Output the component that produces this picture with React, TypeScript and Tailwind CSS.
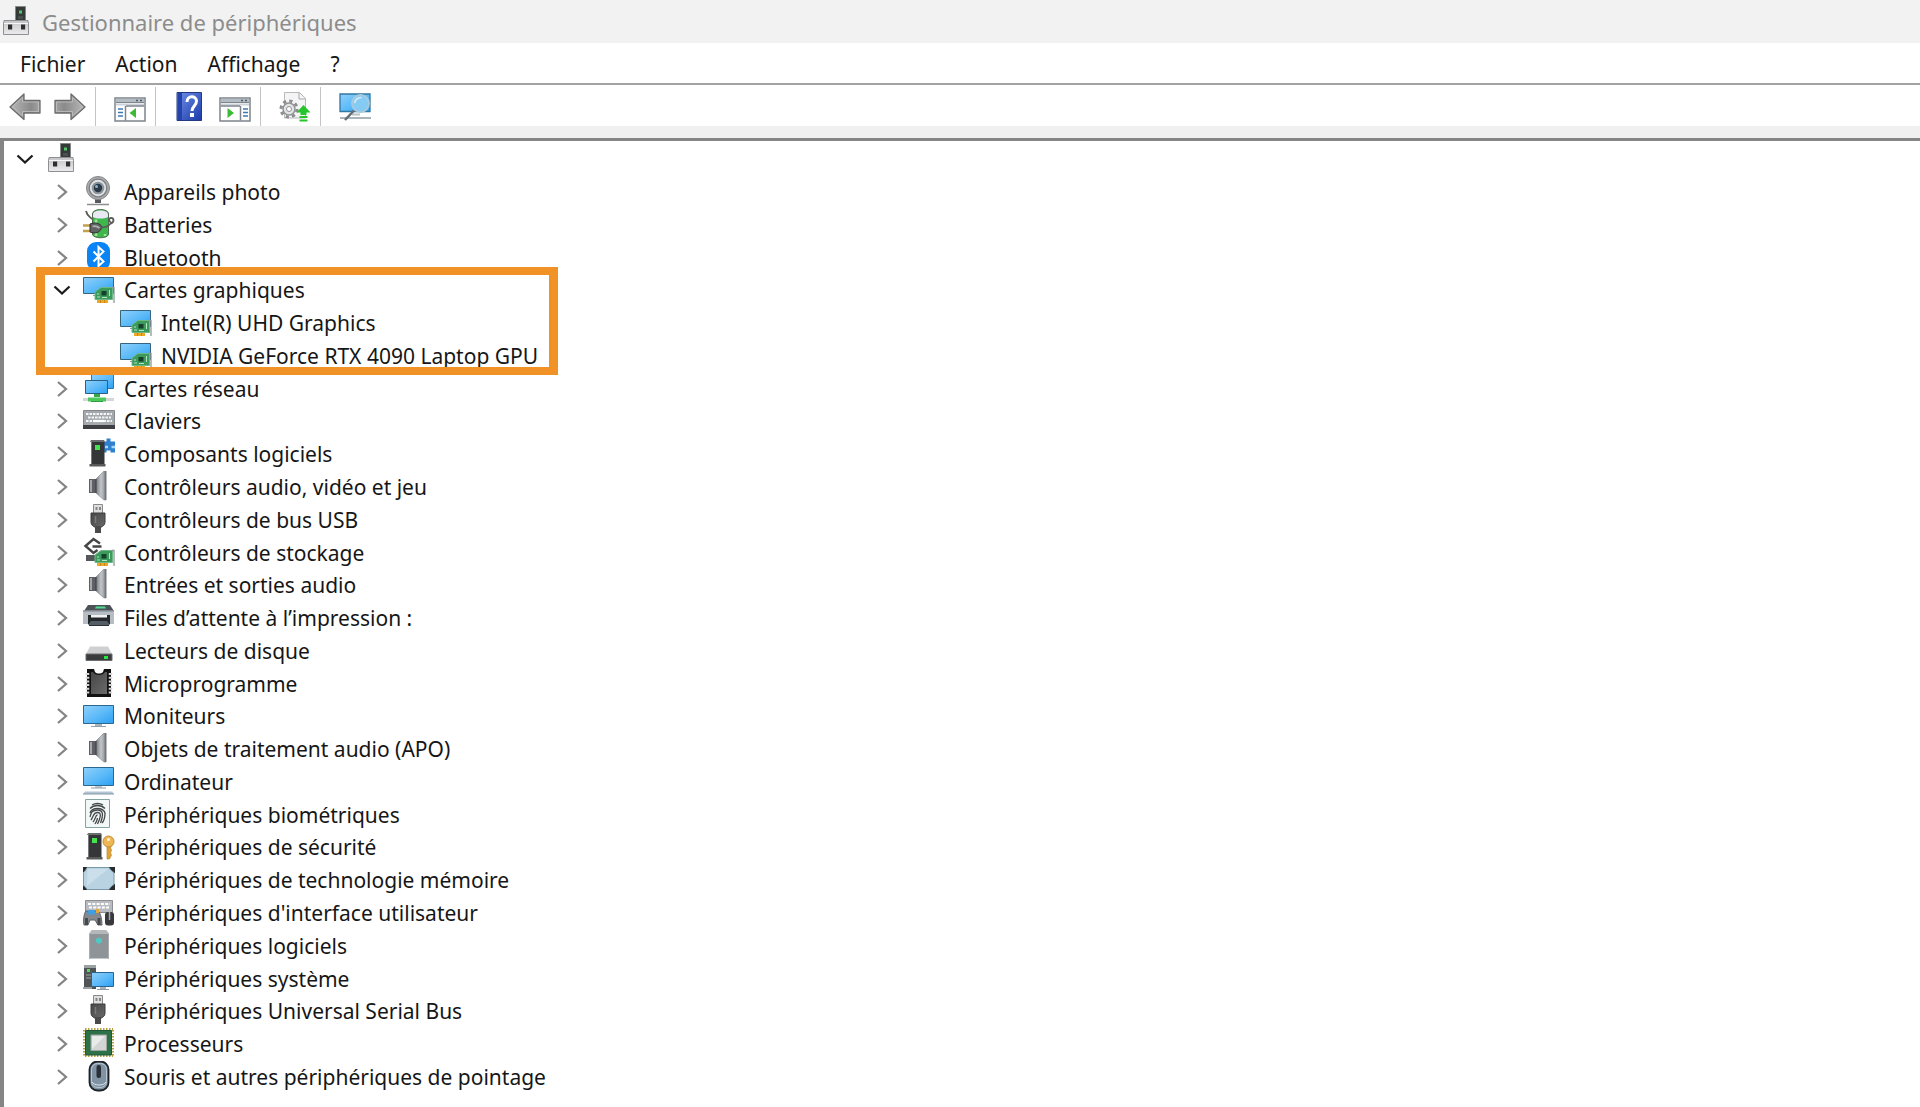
import React, { useState } from 'react';

interface IconProps {
  className?: string;
}

interface Device {
  name: string;
  icon: React.FC<IconProps>;
  children?: Device[];
}

const Svg: React.FC<{ className?: string; children: React.ReactNode }> = ({ className = 'h-8 w-8', children }) => (
  <svg className={`shrink-0 ${className}`} viewBox="0 0 32 32" fill="none" aria-hidden="true">
    {children}
  </svg>
);

/* Shared gradients */
const Gradients = () => (
  <svg className="absolute h-0 w-0" aria-hidden="true">
    <defs>
      <linearGradient id="screen" x1="0" y1="0" x2="1" y2="1">
        <stop offset="0" stopColor="#8fd0fb" />
        <stop offset="0.55" stopColor="#5ab9f8" />
        <stop offset="1" stopColor="#2c9ff3" />
      </linearGradient>
      <linearGradient id="steel" x1="0" y1="0" x2="1" y2="0">
        <stop offset="0" stopColor="#777b80" />
        <stop offset="0.5" stopColor="#c3c6ca" />
        <stop offset="1" stopColor="#85898e" />
      </linearGradient>
      <linearGradient id="light" x1="0" y1="0" x2="0" y2="1">
        <stop offset="0" stopColor="#c4c4c7" />
        <stop offset="1" stopColor="#ececef" />
      </linearGradient>
      <linearGradient id="arrow" x1="0" y1="0" x2="1" y2="0">
        <stop offset="0" stopColor="#b8b8b8" />
        <stop offset="0.7" stopColor="#8a8a8a" />
        <stop offset="1" stopColor="#a5a5a5" />
      </linearGradient>
      <linearGradient id="help" x1="0" y1="0" x2="1" y2="1">
        <stop offset="0" stopColor="#6f8fe8" />
        <stop offset="1" stopColor="#1c3aa8" />
      </linearGradient>
      <linearGradient id="dark" x1="0" y1="0" x2="1" y2="1">
        <stop offset="0" stopColor="#474747" />
        <stop offset="1" stopColor="#6a6a6a" />
      </linearGradient>
    </defs>
  </svg>
);

const DeviceManagerIcon: React.FC<IconProps> = ({ className }) => (
  <Svg className={className}>
    <path d="M14.500 .5h10v14h-10z" fill="#343a37" stroke="#85878a" />
    <path d="M18 4.500h3v3h-3z" fill="#58c46a" />
    <path d="M17 10h5v3h-5z" fill="#4a504d" />
    <path d="M3 14.500h24l.5 3.500v10.500h-25V18z" fill="url(#light)" stroke="#8f9094" />
    <path d="M3 17.500h24" stroke="#f6f6f7" />
    <path d="M7 18.500h4v5H7zM20 18.500h4v5h-4z" fill="#2e2e30" />
    <path d="M11.500 18v5.500M24.500 18v5.500" stroke="#b9babd" />
  </Svg>
);

const CameraIcon: React.FC<IconProps> = ({ className }) => (
  <Svg className={className}>
    <path d="M12 23h6v4h-6z" fill="#55585c" />
    <path d="M4 28.500h22" stroke="#8b8d90" strokeWidth="1.500" />
    <circle cx="15" cy="12" r="11.500" fill="#a9abad" stroke="#84868a" />
    <circle cx="15" cy="12" r="8.800" fill="#e2e3e4" stroke="#7b7d80" strokeWidth="1.300" />
    <circle cx="15" cy="12" r="6.300" fill="#8b959e" />
    <circle cx="15" cy="12" r="4.200" fill="#2c3946" />
    <circle cx="13.500" cy="10.500" r="1.500" fill="#8eb4cf" />
  </Svg>
);

const BatteryIcon: React.FC<IconProps> = ({ className }) => (
  <Svg className={className}>
    <path d="M9.500 5c0-6 16-6 16 0v20c0 5-16 5-16 0z" fill="#3fb64b" stroke="#4f6a50" />
    <path d="M10 5.500c0-5.500 15-5.500 15 0v2.500c-4 2-11 2-15 0z" fill="#e9e9f6" />
    <path d="M13 10.500v6M13 24v3M22 25v2" stroke="#9be797" strokeWidth="2.500" />
    <path d="M3 2c1 5 4 6 6 8" stroke="#5a5a55" strokeWidth="1.800" />
    <path d="M0 16.500h8M0 22h8" stroke="#c3a049" strokeWidth="2.500" />
    <path d="M7 15c5-2 10-1 12 3-2 6-7 7-12 5z" fill="#626365" stroke="#303031" />
    <path d="M9.500 17.500c3-1 5 0 7 1.500" stroke="#b0b1b3" strokeWidth="1.800" />
    <path d="M18 18.500c4 0 7-1 9-3.500 5-1.500 4-6.500 1-6s-2.500 3 .5 5" stroke="#5a5a5a" strokeWidth="1.800" />
  </Svg>
);

const BluetoothIcon: React.FC<IconProps> = ({ className }) => (
  <Svg className={className}>
    <rect x="4" y="0" width="23" height="29" rx="9" fill="#0a84f5" />
    <path d="M10.500 9.500l10 10-5 4.500V5l5 4.500-10 10" stroke="#fff" strokeWidth="2" />
  </Svg>
);

const BoardShape = () => (
  <g>
    <path d="M14 25h11v4H14z" fill="#efa823" />
    <path d="M17.500 25v4M21.500 25v4" stroke="#cd8717" />
    <path d="M12 18l6-4.500h11.500v12H12z" fill="#3c9a5c" stroke="#6cb985" />
    <path d="M18.500 17h5v4.500h-5z" fill="#17402b" />
    <path d="M14 20h2M14 23h3M26.500 16v6M19 23.500h5" stroke="#b5e4c0" />
    <path d="M28.500 13.500h2.500V29" stroke="#90979b" strokeWidth="1.300" />
  </g>
);

const DisplayIcon: React.FC<IconProps> = ({ className }) => (
  <Svg className={className}>
    <path d="M.5 3.500h30v16H.5z" fill="url(#screen)" stroke="#35647f" />
    <path d="M10 21.500h3" stroke="#8d979e" />
    <BoardShape />
  </Svg>
);

const NetworkIcon: React.FC<IconProps> = ({ className }) => (
  <Svg className={className}>
    <path d="M8.500 1.500h22v14h-22z" fill="url(#screen)" stroke="#2d78aa" />
    <path d="M2.500 7.500h22v13h-22z" fill="url(#screen)" stroke="#2a5f85" />
    <path d="M11 21h6v3h-6z" fill="#35a94a" />
    <path d="M0 26.500h31" stroke="#d4d6d8" strokeWidth="3" />
    <path d="M5 26.500h18" stroke="#4cc95c" strokeWidth="4" />
    <path d="M8 28.500h12" stroke="#2f9e43" />
  </Svg>
);

const KeyboardIcon: React.FC<IconProps> = ({ className }) => (
  <Svg className={className}>
    <path d="M.5 5.500h31v18H.5z" fill="#a5a8ad" stroke="#85888d" />
    <path d="M0 20h32v4H0z" fill="#3d3f42" />
    <path d="M3 9h26M5 12.500h23M3 16h26" stroke="#f4f5f6" strokeWidth="2.200" strokeDasharray="2.500 1" />
    <path d="M10 16h11" stroke="#fff" strokeWidth="2.200" />
  </Svg>
);

const TowerShape = () => (
  <g>
    <path d="M8 2h13l1 2H7z" fill="#6b6d6f" />
    <path d="M8 4h13.500v22H8z" fill="#343637" />
    <path d="M8.500 3v23" stroke="#77797b" />
    <path d="M6.500 26h16v2.500h-16z" fill="#57595b" />
    <path d="M12 7h5v5h-5z" fill="#45e34f" />
  </g>
);

const SoftwareComponentIcon: React.FC<IconProps> = ({ className }) => (
  <Svg className={className}>
    <path d="M19 3.500h4.500V.5h4v3H32v11h-4.500v-2h-4v2H19z" fill="#2f80cd" />
    <path d="M22 9h3M28.500 9H32" stroke="#a7d6f7" strokeWidth="2.500" />
    <TowerShape />
  </Svg>
);

const SpeakerIcon: React.FC<IconProps> = ({ className }) => (
  <Svg className={className}>
    <path d="M13 8l8-8h2v29h-2l-8-7z" fill="url(#steel)" stroke="#7e8185" strokeWidth=".6" />
    <path d="M22.500 0v29" stroke="#74777a" strokeWidth="1.600" />
    <path d="M6 8h7v14H6z" fill="#5d6064" />
    <path d="M8 9v12" stroke="#a7a9ac" strokeWidth="2" />
    <path d="M13 8v14" stroke="#3c3e41" />
  </Svg>
);

const UsbIcon: React.FC<IconProps> = ({ className }) => (
  <Svg className={className}>
    <path d="M10.500.5h9v9h-9z" fill="#dededf" stroke="#88898b" />
    <path d="M12.500 3h2v3h-2zM16 3h2v3h-2z" fill="#858688" />
    <path d="M8 9h14v9c0 3-2 4-3.500 5h-7C10 22 8 21 8 18z" fill="url(#dark)" stroke="#3d3d3e" />
    <path d="M12 22h6v7h-6z" fill="#4a4a4b" />
    <path d="M12.500 12v7" stroke="#7b7b7c" strokeWidth="1.500" />
  </Svg>
);

const StorageIcon: React.FC<IconProps> = ({ className }) => (
  <Svg className={className}>
    <path d="M3 18h12v6H3z" fill="#55585a" />
    <path d="M17 6.500L10.500 2 2.500 9l8 7 4-3" stroke="#454545" strokeWidth="2.500" />
    <path d="M9.500 9.500h9" stroke="#454545" strokeWidth="2.500" />
    <BoardShape />
  </Svg>
);

const PrinterIcon: React.FC<IconProps> = ({ className }) => (
  <Svg className={className}>
    <path d="M5 3h22l4 6H1z" fill="#4b5358" />
    <path d="M13 4.500h9l1 2H12z" fill="#52dc91" />
    <path d="M0 8.500h31V22H0z" fill="#b6bdc4" />
    <path d="M0 9h31" stroke="#7c848b" />
    <path d="M5 13h22v9H5z" fill="#25282a" />
    <path d="M8 13h16v2.500H8z" fill="#f1f3f4" />
    <path d="M8 19h16l3 4H5z" fill="#535d65" />
    <path d="M6 23.500h20" stroke="#2d3033" />
  </Svg>
);

const DiskIcon: React.FC<IconProps> = ({ className }) => (
  <Svg className={className}>
    <path d="M7 11.500h18l4 7.500H3z" fill="#cfd0d1" />
    <path d="M3 19h26v6.500H3z" fill="#393b3c" stroke="#6b6d6f" />
    <path d="M21 21h4v3h-4z" fill="#2be33f" />
  </Svg>
);

const FirmwareIcon: React.FC<IconProps> = ({ className }) => (
  <Svg className={className}>
    <path d="M4 1h7l1 3c2 2 6 2 8 0l1-3h7v28H4z" fill="#121212" />
    <path d="M8 4h2c2 4 10 4 12 0h2v22H8z" fill="url(#dark)" />
    <path d="M4.500 5v22M27.500 5v22" stroke="#d6d6d6" strokeWidth="3.500" strokeDasharray="2 1.700" />
  </Svg>
);

const MonitorIcon: React.FC<IconProps> = ({ className }) => (
  <Svg className={className}>
    <path d="M.5 5.500h30v18H.5z" fill="url(#screen)" stroke="#2c6790" />
    <path d="M12 24h7v2h-7z" fill="#aab4bc" />
    <path d="M8 26.500h15" stroke="#93a0aa" />
  </Svg>
);

const ComputerIcon: React.FC<IconProps> = ({ className }) => (
  <Svg className={className}>
    <path d="M.5 1.500h30v18H.5z" fill="url(#screen)" stroke="#2c6790" />
    <path d="M12 20h7v2h-7z" fill="#c2c9ce" />
    <path d="M8 22h15" stroke="#93a0aa" />
    <path d="M2 25.500h27l2 2.500H0z" fill="#b3c5d4" />
    <path d="M0 28h31" stroke="#8898a5" />
  </Svg>
);

const FingerprintIcon: React.FC<IconProps> = ({ className }) => (
  <Svg className={className}>
    <path d="M2.500.5h24v28h-24z" fill="#f2f8f8" stroke="#86a3a4" />
    <g stroke="#45484a" strokeWidth="1.300">
      <path d="M9 6c3-2 8-2 11 0M7 9.500c4-4 11-4 15 0M7 14c2-6 13-6 15 0 0 5-1 8-3 10" />
      <path d="M7 18c1-3 1-7 7.500-7 6 0 6 5 3 13M8 21c3-4 2-7.500 6.500-7.500s3 5.500 0 11.500M10 23c3-3 2-7 4.500-7M12 25c2-3 2-4 2.500-6" />
    </g>
  </Svg>
);

const SecurityIcon: React.FC<IconProps> = ({ className }) => (
  <Svg className={className}>
    <g transform="translate(-3 0)">
      <TowerShape />
    </g>
    <path d="M24 14h4.500l-1 3 1 2-1 3 1 2-2 4H24z" fill="#e2a336" stroke="#b98530" strokeWidth=".7" />
    <circle cx="25.500" cy="10.500" r="5.500" fill="#edb854" stroke="#c18c38" />
    <circle cx="25.500" cy="8.500" r="1.500" fill="#fff4dd" />
  </Svg>
);

const MemoryIcon: React.FC<IconProps> = ({ className }) => (
  <Svg className={className}>
    <path d="M0 3h9v6H0zM23 3h9v6h-9zM0 20h9v6H0zM23 20h9v6h-9z" fill="#292b2d" />
    <path d="M4 3.500h22c1 2 3 4 5 5v12c-2 1-4 3-5 5H4c-1-2-2-3-3.500-4v-13C2 7 3 6 4 3.500z" fill="#b9d3e2" stroke="#7b98aa" />
    <path d="M4.500 5H25L4 22z" fill="#cbdfea" />
  </Svg>
);

const HidIcon: React.FC<IconProps> = ({ className }) => (
  <Svg className={className}>
    <path d="M2.500 3.500h27v12h-27z" fill="#b8bbc0" stroke="#8b8e93" />
    <path d="M5 7h22M6 10.500h20" stroke="#fff" strokeWidth="2" strokeDasharray="3 1.300" />
    <path d="M3 14h12c3 2 4 10 4 14h-4l-3-5H7l-2 5H1c-1-5 0-12 2-14z" fill="#85898d" stroke="#5f6366" />
    <path d="M5 13h7v4.500H5z" fill="#3f9fe0" />
    <path d="M13 12h3v4h-3z" fill="#e9a537" />
    <path d="M2 21h3v7H2zM14.500 21h3v7h-3z" fill="#46494c" />
    <rect x="22" y="15" width="9" height="13.500" rx="3" fill="#37393c" />
    <path d="M26.500 15v8" stroke="#a6a9ac" strokeWidth="1.500" />
  </Svg>
);

const SoftwareDeviceIcon: React.FC<IconProps> = ({ className }) => (
  <Svg className={className}>
    <path d="M9 0h14l3 4v25H6V4z" fill="#8f9499" />
    <path d="M9 0h14l3 4H6z" fill="#b4b8bb" />
    <path d="M6.500 4v25M25.500 4v25" stroke="#aaaeb1" />
    <path d="M13 9l3-1.500L19 9v3l-3 2-3-2z" fill="#4fc9c3" />
    <path d="M7 28.500h18" stroke="#c5c8ca" />
  </Svg>
);

const SystemIcon: React.FC<IconProps> = ({ className }) => (
  <Svg className={className}>
    <path d="M1 2h12v24H1z" fill="#505457" />
    <path d="M1 2h12v3H1zM0 24h9v2H0z" fill="#9ba0a3" />
    <path d="M4 6h3v3H4z" fill="#57d85f" />
    <path d="M3 12h6M3 15h5" stroke="#85898c" strokeWidth="1.500" />
    <path d="M8.500 9.500h22v14h-22z" fill="url(#screen)" stroke="#2a6590" />
    <path d="M17 24h6v2h-6z" fill="#a9b2b9" />
    <path d="M14 26.500h12" stroke="#8d9ba5" />
  </Svg>
);

const ProcessorIcon: React.FC<IconProps> = ({ className }) => (
  <Svg className={className}>
    <path d="M1 2v26M30 2v26" stroke="#b8a144" strokeWidth="2" strokeDasharray="1.500 1.500" />
    <path d="M2 1h28M2 28h28" stroke="#b8a144" strokeWidth="2" strokeDasharray="1.500 1.500" />
    <path d="M2.500 2.500h26v24.500h-26z" fill="#2d7148" stroke="#215738" />
    <path d="M8 7h15.500v15.500H8z" fill="#d3d5d4" stroke="#9fa6a1" />
    <path d="M9 8h13L9 21z" fill="#e9eaea" />
  </Svg>
);

const MouseIcon: React.FC<IconProps> = ({ className }) => (
  <Svg className={className}>
    <rect x="6.500" y=".5" width="19" height="29" rx="8" fill="#7f93a4" stroke="#1e2226" strokeWidth="1.800" />
    <rect x="8.500" y="2.500" width="15" height="24" rx="6" stroke="#b8c7d2" />
    <path d="M9 21c2 4 12 4 14 0" stroke="#dbe4ea" />
    <rect x="13.500" y="4" width="4.500" height="13" rx="2" fill="#2b3036" />
  </Svg>
);

/* Toolbar glyphs */
const ArrowIcon: React.FC<{ flip?: boolean }> = ({ flip }) => (
  <Svg className={flip ? 'h-8 w-8 -scale-x-100' : 'h-8 w-8'}>
    <path d="M1 16L15 3v6.500h16v12.500H15v6.500z" fill="url(#arrow)" stroke="#6c6c6c" strokeWidth="1.300" strokeLinejoin="round" />
    <path d="M3.500 15.500L13.500 6.500v4.500H29.500v9.500h-16v4.500z" stroke="#c2c2c2" strokeWidth=".8" />
  </Svg>
);

const ConsoleIcon: React.FC<{ side: 'left' | 'right' }> = ({ side }) => (
  <Svg>
    <path d="M1 7h30v23H1z" fill="#fff" stroke="#7d848c" strokeWidth="1.500" />
    <path d="M2 8h28v3H2z" fill="#b3bbc3" />
    <path d="M2 11.500h28" stroke="#7d848c" />
    <path d="M2 13.500h28" stroke="#ccd2d8" strokeWidth="2" />
    <path d="M22 9.500h2M26 9.500h2" stroke="#4f5962" strokeWidth="1.500" />
    {side === 'left' ? (
      <g>
        <path d="M11.500 15v14.500M12 15h18" stroke="#7d848c" strokeWidth="1.500" />
        <path d="M4 18h5M4 21.500h5M4 25h5" stroke="#3c78b5" strokeWidth="1.500" />
        <path d="M22 17v10l-6.500-5z" fill="#3cba35" />
      </g>
    ) : (
      <g>
        <path d="M21.500 15v14.500M2 15h19" stroke="#7d848c" strokeWidth="1.500" />
        <path d="M24 18h5M24 21.500h5M24 25h5" stroke="#3c78b5" strokeWidth="1.500" />
        <path d="M8.500 17v10l6.500-5z" fill="#3cba35" />
      </g>
    )}
  </Svg>
);

const HelpIcon = () => (
  <Svg>
    <path d="M3 1.500h24.500v28H3z" fill="url(#help)" stroke="#23397f" />
    <path d="M6 2v27" stroke="#2444ad" strokeWidth="4" />
    <path d="M13 11c0-7 9.500-6.500 9.500-1 0 5-4.500 5-4.500 10" stroke="#fff" strokeWidth="3" />
    <path d="M16 22h4v4h-4z" fill="#fff" />
  </Svg>
);

const UpdateIcon = () => (
  <Svg>
    <path d="M5.500 1.500h15l6 6V27h-21z" fill="#f4f4f5" stroke="#b8b9bb" />
    <path d="M20 1.500v6.500h6.500" stroke="#a8a9ab" />
    <circle cx="10" cy="18" r="8" stroke="#8b8d8f" strokeWidth="3" strokeDasharray="3.200 3.083" />
    <circle cx="10" cy="18" r="6" fill="#e3e4e5" stroke="#909294" strokeWidth="1.500" />
    <circle cx="10" cy="18" r="2.500" fill="#fff" stroke="#909294" />
    <path d="M24.500 14l7 7.500h-4V24h-6v-2.500h-4z" fill="#27c52d" />
    <path d="M20.500 26h8M20.500 29.500h8" stroke="#27c52d" strokeWidth="2" />
  </Svg>
);

const ScanIcon = () => (
  <Svg>
    <path d="M1 3h30v17.500H1z" fill="url(#screen)" stroke="#32779f" strokeWidth="1.300" />
    <path d="M1 27h31" stroke="#8c9ba6" strokeWidth="1.500" />
    <path d="M13 22.500h8v2h-8z" fill="#b6c0c7" />
    <path d="M15.500 19L6 29" stroke="#626d75" strokeWidth="2.500" />
    <circle cx="21.500" cy="12.500" r="8.500" fill="#8ccdf2" fillOpacity=".9" stroke="#a6cbe0" strokeWidth="1.800" />
    <path d="M15.500 12c1-4 4-5.500 7-5.500" stroke="#d9f0fc" strokeWidth="1.500" />
  </Svg>
);

const Chevron: React.FC<{ open: boolean }> = ({ open }) => (
  <svg className="h-5 w-5" viewBox="0 0 20 20" fill="none" aria-hidden="true">
    {open ? (
      <path d="M2.500 6.500l7.500 7 7.500-7" stroke="#1c1c1c" strokeWidth="2.300" />
    ) : (
      <path d="M6 3l8 7-8 7" stroke="#858585" strokeWidth="2.300" />
    )}
  </svg>
);

const menus: string[] = ['Fichier', 'Action', 'Affichage', '?'];

const devices: Device[] = [
  { name: 'Appareils photo', icon: CameraIcon },
  { name: 'Batteries', icon: BatteryIcon },
  { name: 'Bluetooth', icon: BluetoothIcon },
  {
    name: 'Cartes graphiques',
    icon: DisplayIcon,
    children: [
      { name: 'Intel(R) UHD Graphics', icon: DisplayIcon },
      { name: 'NVIDIA GeForce RTX 4090 Laptop GPU', icon: DisplayIcon },
    ],
  },
  { name: 'Cartes réseau', icon: NetworkIcon },
  { name: 'Claviers', icon: KeyboardIcon },
  { name: 'Composants logiciels', icon: SoftwareComponentIcon },
  { name: 'Contrôleurs audio, vidéo et jeu', icon: SpeakerIcon },
  { name: 'Contrôleurs de bus USB', icon: UsbIcon },
  { name: 'Contrôleurs de stockage', icon: StorageIcon },
  { name: 'Entrées et sorties audio', icon: SpeakerIcon },
  { name: 'Files d’attente à l’impression :', icon: PrinterIcon },
  { name: 'Lecteurs de disque', icon: DiskIcon },
  { name: 'Microprogramme', icon: FirmwareIcon },
  { name: 'Moniteurs', icon: MonitorIcon },
  { name: 'Objets de traitement audio (APO)', icon: SpeakerIcon },
  { name: 'Ordinateur', icon: ComputerIcon },
  { name: 'Périphériques biométriques', icon: FingerprintIcon },
  { name: 'Périphériques de sécurité', icon: SecurityIcon },
  { name: 'Périphériques de technologie mémoire', icon: MemoryIcon },
  { name: "Périphériques d'interface utilisateur", icon: HidIcon },
  { name: 'Périphériques logiciels', icon: SoftwareDeviceIcon },
  { name: 'Périphériques système', icon: SystemIcon },
  { name: 'Périphériques Universal Serial Bus', icon: UsbIcon },
  { name: 'Processeurs', icon: ProcessorIcon },
  { name: 'Souris et autres périphériques de pointage', icon: MouseIcon },
];

const ToolButton: React.FC<{ label: string; children: React.ReactNode }> = ({ label, children }) => (
  <button type="button" aria-label={label} className="flex items-center">
    {children}
  </button>
);

const Separator = () => <div className="w-px self-stretch bg-[#c4c4c4]" />;

const DeviceRow: React.FC<{ device: Device; open: boolean; onToggle: () => void }> = ({ device, open, onToggle }) => {
  const Icon = device.icon;

  return (
    <div className="flex min-h-8 flex-1 items-center">
      <button type="button" aria-label={device.name} aria-expanded={open} onClick={onToggle} className="mr-[11px]">
        <Chevron open={open} />
      </button>
      <Icon />
      <span className="ml-[9px] whitespace-nowrap">{device.name}</span>
    </div>
  );
};

const App: React.FC = () => {
  const [rootOpen, setRootOpen] = useState(true);
  const [expanded, setExpanded] = useState<string[]>(['Cartes graphiques']);

  const toggle = (name: string) => {
    setExpanded((prev) => (prev.includes(name) ? prev.filter((n) => n !== name) : [...prev, name]));
  };

  return (
    <div className="flex min-h-screen flex-col bg-white font-['Noto_Sans',sans-serif] text-[21px] leading-8 text-[#161616]">
      <Gradients />

      {/* Title bar */}
      <header className="flex h-[43px] items-center bg-[#f2f2f2] pl-px">
        <DeviceManagerIcon className="h-8 w-8" />
        <h1 className="ml-[9px] text-[22px] text-[#8c8c8c]">Gestionnaire de périphériques</h1>
      </header>

      {/* Menu bar */}
      <nav className="flex h-10 items-center gap-[30px] pt-0.5 pl-5">
        {menus.map((menu) => (
          <button key={menu} type="button">
            {menu}
          </button>
        ))}
      </nav>

      {/* Toolbar */}
      <div className="flex h-[43px] items-center border-t-2 border-[#a3a3a3] pt-0.5 pl-[9px]">
        <div className="flex items-center gap-[13px] pr-[9px]">
          <ToolButton label="Précédent">
            <ArrowIcon />
          </ToolButton>
          <ToolButton label="Suivant">
            <ArrowIcon flip />
          </ToolButton>
        </div>
        <Separator />
        <div className="flex items-center pr-[9px] pl-[18px]">
          <ToolButton label="Afficher l'arborescence">
            <ConsoleIcon side="left" />
          </ToolButton>
        </div>
        <Separator />
        <div className="flex items-center gap-[13px] pr-[9px] pl-[18px]">
          <ToolButton label="Aide">
            <HelpIcon />
          </ToolButton>
          <ToolButton label="Afficher le volet Actions">
            <ConsoleIcon side="right" />
          </ToolButton>
        </div>
        <Separator />
        <div className="flex items-center pr-[9px] pl-[18px]">
          <ToolButton label="Mettre à jour">
            <UpdateIcon />
          </ToolButton>
        </div>
        <Separator />
        <div className="flex items-center pl-[18px]">
          <ToolButton label="Rechercher les modifications">
            <ScanIcon />
          </ToolButton>
        </div>
      </div>
      <div className="h-3 bg-[#f0f0f0]" />

      {/* Device tree */}
      <main className="flex flex-1 flex-col border-t-[3px] border-l-4 border-[#858585] pt-0.5 pb-[14px] pl-[11px]">
        <div className="flex min-h-8 flex-1 items-center">
          <button
            type="button"
            aria-label="Ordinateur local"
            aria-expanded={rootOpen}
            onClick={() => setRootOpen(!rootOpen)}
            className="mr-[11px]"
          >
            <Chevron open={rootOpen} />
          </button>
          <DeviceManagerIcon className="h-8 w-8" />
        </div>

        {rootOpen && (
          <ul className="flex flex-[28] flex-col pl-[37px]">
            {devices.map((device) => {
              const open = expanded.includes(device.name);

              if (!device.children || !open) {
                return (
                  <li key={device.name} className="flex flex-1 flex-col">
                    <DeviceRow device={device} open={open} onToggle={() => toggle(device.name)} />
                  </li>
                );
              }

              return (
                <li key={device.name} className="relative flex flex-[3] flex-col self-start pr-5">
                  <DeviceRow device={device} open={open} onToggle={() => toggle(device.name)} />
                  <ul className="flex flex-[2] flex-col pl-[68px]">
                    {device.children.map((child) => (
                      <li key={child.name} className="flex min-h-8 flex-1 items-center">
                        <child.icon />
                        <span className="ml-[9px] whitespace-nowrap">{child.name}</span>
                      </li>
                    ))}
                  </ul>
                  {/* Highlight frame */}
                  <div className="pointer-events-none absolute -top-[7px] right-0 -bottom-[3px] -left-4 border-x-[9px] border-y-8 border-[#f09225]" />
                </li>
              );
            })}
          </ul>
        )}
      </main>
    </div>
  );
};

export default App;
